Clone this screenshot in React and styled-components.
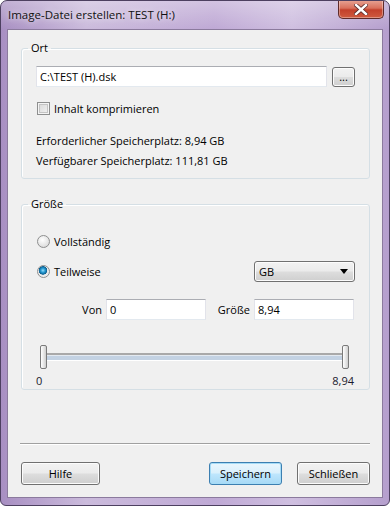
import React from "react";
import styled, { createGlobalStyle } from "styled-components";

const Global = createGlobalStyle`
  html, body {
    margin: 0;
    padding: 0;
    background: #ffffff;
  }
  body {
    font-family: "Open Sans", "Noto Sans", sans-serif;
    font-size: 11px;
    color: #000;
  }
`;

const Frame = styled.div`
  box-sizing: border-box;
  width: 390px;
  height: 506px;
  display: flex;
  flex-direction: column;
  border: 1px solid #4d4060;
  border-radius: 7px 7px 6px 6px;
  background:
    linear-gradient(180deg, rgba(255, 255, 255, 0.3) 0px, rgba(255, 255, 255, 0) 28px),
    linear-gradient(90deg, #a88fc2 0%, #cbbbdc 22%, #bfa9d5 55%, #cfbfe0 75%, #b59fcd 100%);
  overflow: hidden;
`;

const TitleBar = styled.div`
  height: 28px;
  display: flex;
  align-items: flex-start;
  justify-content: space-between;
  padding-left: 7px;
`;

const Title = styled.div`
  margin-top: 6px;
  font-size: 11.5px;
  color: #111;
  text-shadow: 0 0 6px rgba(255, 255, 255, 0.9);
`;

const CloseButton = styled.div`
  width: 46px;
  height: 19px;
  margin-top: -1px;
  margin-right: 5px;
  box-sizing: border-box;
  border: 1px solid #5e2a2a;
  border-top: none;
  border-radius: 0 0 5px 5px;
  background: linear-gradient(180deg, #e8a596 0%, #d9705c 45%, #c3402b 55%, #cf5a3f 100%);
  box-shadow: inset 0 0 0 1px rgba(255, 255, 255, 0.35);
  display: flex;
  align-items: center;
  justify-content: center;
`;

const Client = styled.div`
  flex: 1;
  margin: 0 6px 7px;
  border: 1px solid #8b7a9d;
  background: #f0f0f0;
  display: flex;
  flex-direction: column;
  padding: 10px 12px 0 13px;
`;

const Group = styled.fieldset`
  margin: 0;
  padding: 0 14px 0 14px;
  border: 1px solid #d5dfe5;
  border-radius: 3px;
  min-width: 0;
  box-shadow: inset 1px 1px 0 #ffffff;
  & + & {
    margin-top: 17px;
  }
`;

const Legend = styled.legend`
  margin-left: -8px;
  padding: 0 3px;
  line-height: 16px;
`;

const Row = styled.div`
  display: flex;
  align-items: center;
  height: ${(p) => p.h || 20}px;
  margin-top: ${(p) => p.mt || 0}px;
  gap: ${(p) => p.gap || 0}px;
`;

const TextBox = styled.div`
  box-sizing: border-box;
  height: 21px;
  width: ${(p) => (p.w ? `${p.w}px` : "auto")};
  flex: ${(p) => (p.w ? "none" : 1)};
  background: #fff;
  border: 1px solid #e2e3ea;
  border-top-color: #abadb3;
  border-bottom-color: #e3e9ef;
  display: flex;
  align-items: center;
  padding-left: 3px;
`;

const Button = styled.div`
  box-sizing: border-box;
  width: ${(p) => p.w}px;
  height: ${(p) => p.h || 23}px;
  border: 1px solid ${(p) => (p.primary ? "#3c7fb1" : "#707070")};
  border-radius: 3px;
  background: ${(p) =>
    p.primary
      ? "linear-gradient(180deg, #eaf6fd 0%, #d9f0fc 48%, #bee6fd 52%, #a7d9f5 100%)"
      : "linear-gradient(180deg, #f2f2f2 0%, #ebebeb 48%, #dddddd 52%, #cfcfcf 100%)"};
  box-shadow: inset 0 0 0 1px ${(p) => (p.primary ? "#a6dcf7" : "#fcfcfc")};
  display: flex;
  align-items: center;
  justify-content: center;
  flex: none;
`;

const Check = styled.span`
  box-sizing: border-box;
  width: 13px;
  height: 13px;
  border: 1px solid #8e8f8f;
  background: linear-gradient(135deg, #d6d6d6 0%, #f4f4f4 100%);
  box-shadow: inset 0 0 0 1px #f4f4f4, inset 0 0 0 2px #c4c4c4;
  margin: 0 4px 0 1px;
`;

const Radio = styled.span`
  box-sizing: border-box;
  width: 13px;
  height: 13px;
  border-radius: 50%;
  border: 1px solid #8e8f8f;
  background: ${(p) =>
    p.checked
      ? "radial-gradient(circle at 45% 40%, #9adcf8 0px, #2a9fd6 2px, #0c5f90 4px, #e8e8e8 4.5px, #f6f6f6 100%)"
      : "radial-gradient(circle at 40% 35%, #ffffff 0px, #e4e4e4 60%, #cfcfcf 100%)"};
  margin: 0 4px 0 1px;
  flex: none;
`;

const Label = styled.span`
  white-space: nowrap;
`;

const InfoLine = styled.div`
  height: 20px;
  line-height: 20px;
`;

const Spacer = styled.div`
  flex: none;
  height: ${(p) => p.h || 0}px;
`;

const Grow = styled.div`
  flex: 1;
`;

const Combo = styled(Button)`
  justify-content: space-between;
  padding: 0 6px 0 4px;
  height: 21px;
`;

const FieldLabel = styled.span`
  box-sizing: border-box;
  text-align: right;
  width: ${(p) => p.w}px;
  padding-right: 4px;
  flex: none;
`;

const Slider = styled.div`
  display: flex;
  align-items: center;
  height: 24px;
  margin: 25px 6px 0 4px;
`;

const Thumb = styled.span`
  box-sizing: border-box;
  width: 7px;
  height: 24px;
  border: 1px solid #7a7a7a;
  border-radius: 2px;
  background: linear-gradient(90deg, #ffffff 0%, #e8e8e8 50%, #cfcfcf 100%);
  flex: none;
`;

const Track = styled.span`
  flex: 1;
  box-sizing: border-box;
  height: 8px;
  border-top: 2px solid #a9a9a9;
  border-bottom: 1px solid #ffffff;
  background: #c3d2e3;
  box-shadow: inset 0 1px 0 #e3e9f0;
`;

const Scale = styled.div`
  display: flex;
  justify-content: space-between;
  line-height: 16px;
  margin: 4px 1px 0 0;
  color: #1a1a2e;
`;

const Separator = styled.div`
  height: 0;
  border-top: 1px solid #a0a0a0;
  border-bottom: 1px solid #ffffff;
  margin: 53px 0 0 -1px;
`;

const Footer = styled.div`
  display: flex;
  align-items: center;
  margin-top: 17px;
  gap: 15px;
`;

export default function App() {
  return (
    <>
      <Global />
      <Frame>
        <TitleBar>
          <Title>Image-Datei erstellen: TEST (H:)</Title>
          <CloseButton>
            <svg width="14" height="11" viewBox="0 0 14 11">
              <path
                d="M2 1 L12 10 M12 1 L2 10"
                stroke="#5a2a2a"
                strokeWidth="4"
                strokeLinecap="square"
              />
              <path
                d="M2 1 L12 10 M12 1 L2 10"
                stroke="#ffffff"
                strokeWidth="2.4"
                strokeLinecap="square"
              />
            </svg>
          </CloseButton>
        </TitleBar>
        <Client>
          <Group>
            <Legend>Ort</Legend>
            <Row h={21} mt={10} gap={5}>
              <TextBox>C:\TEST (H).dsk</TextBox>
              <Button w={23} h={20}>
                ...
              </Button>
            </Row>
            <Row h={20} mt={11}>
              <Check />
              <Label>Inhalt komprimieren</Label>
            </Row>
            <Spacer h={13} />
            <InfoLine>Erforderlicher Speicherplatz: 8,94 GB</InfoLine>
            <InfoLine>Verfügbarer Speicherplatz: 111,81 GB</InfoLine>
            <Spacer h={7} />
          </Group>
          <Group>
            <Legend>Größe</Legend>
            <Row h={20} mt={19}>
              <Radio />
              <Label>Vollständig</Label>
            </Row>
            <Row h={21} mt={10}>
              <Radio checked />
              <Label>Teilweise</Label>
              <Grow />
              <Combo w={101}>
                <span>GB</span>
                <svg width="8" height="5" viewBox="0 0 8 5">
                  <path d="M0 0 L8 0 L4 5 Z" fill="#000" />
                </svg>
              </Combo>
            </Row>
            <Row h={21} mt={17}>
              <FieldLabel w={70}>Von</FieldLabel>
              <TextBox w={100}>0</TextBox>
              <FieldLabel w={48}>Größe</FieldLabel>
              <TextBox w={100}>8,94</TextBox>
            </Row>
            <Slider>
              <Thumb />
              <Track />
              <Thumb />
            </Slider>
            <Scale>
              <span>0</span>
              <span>8,94</span>
            </Scale>
          </Group>
          <Separator />
          <Footer>
            <Button w={79}>Hilfe</Button>
            <Grow />
            <Button w={73} primary>
              Speichern
            </Button>
            <Button w={73}>Schließen</Button>
          </Footer>
        </Client>
      </Frame>
    </>
  );
}
